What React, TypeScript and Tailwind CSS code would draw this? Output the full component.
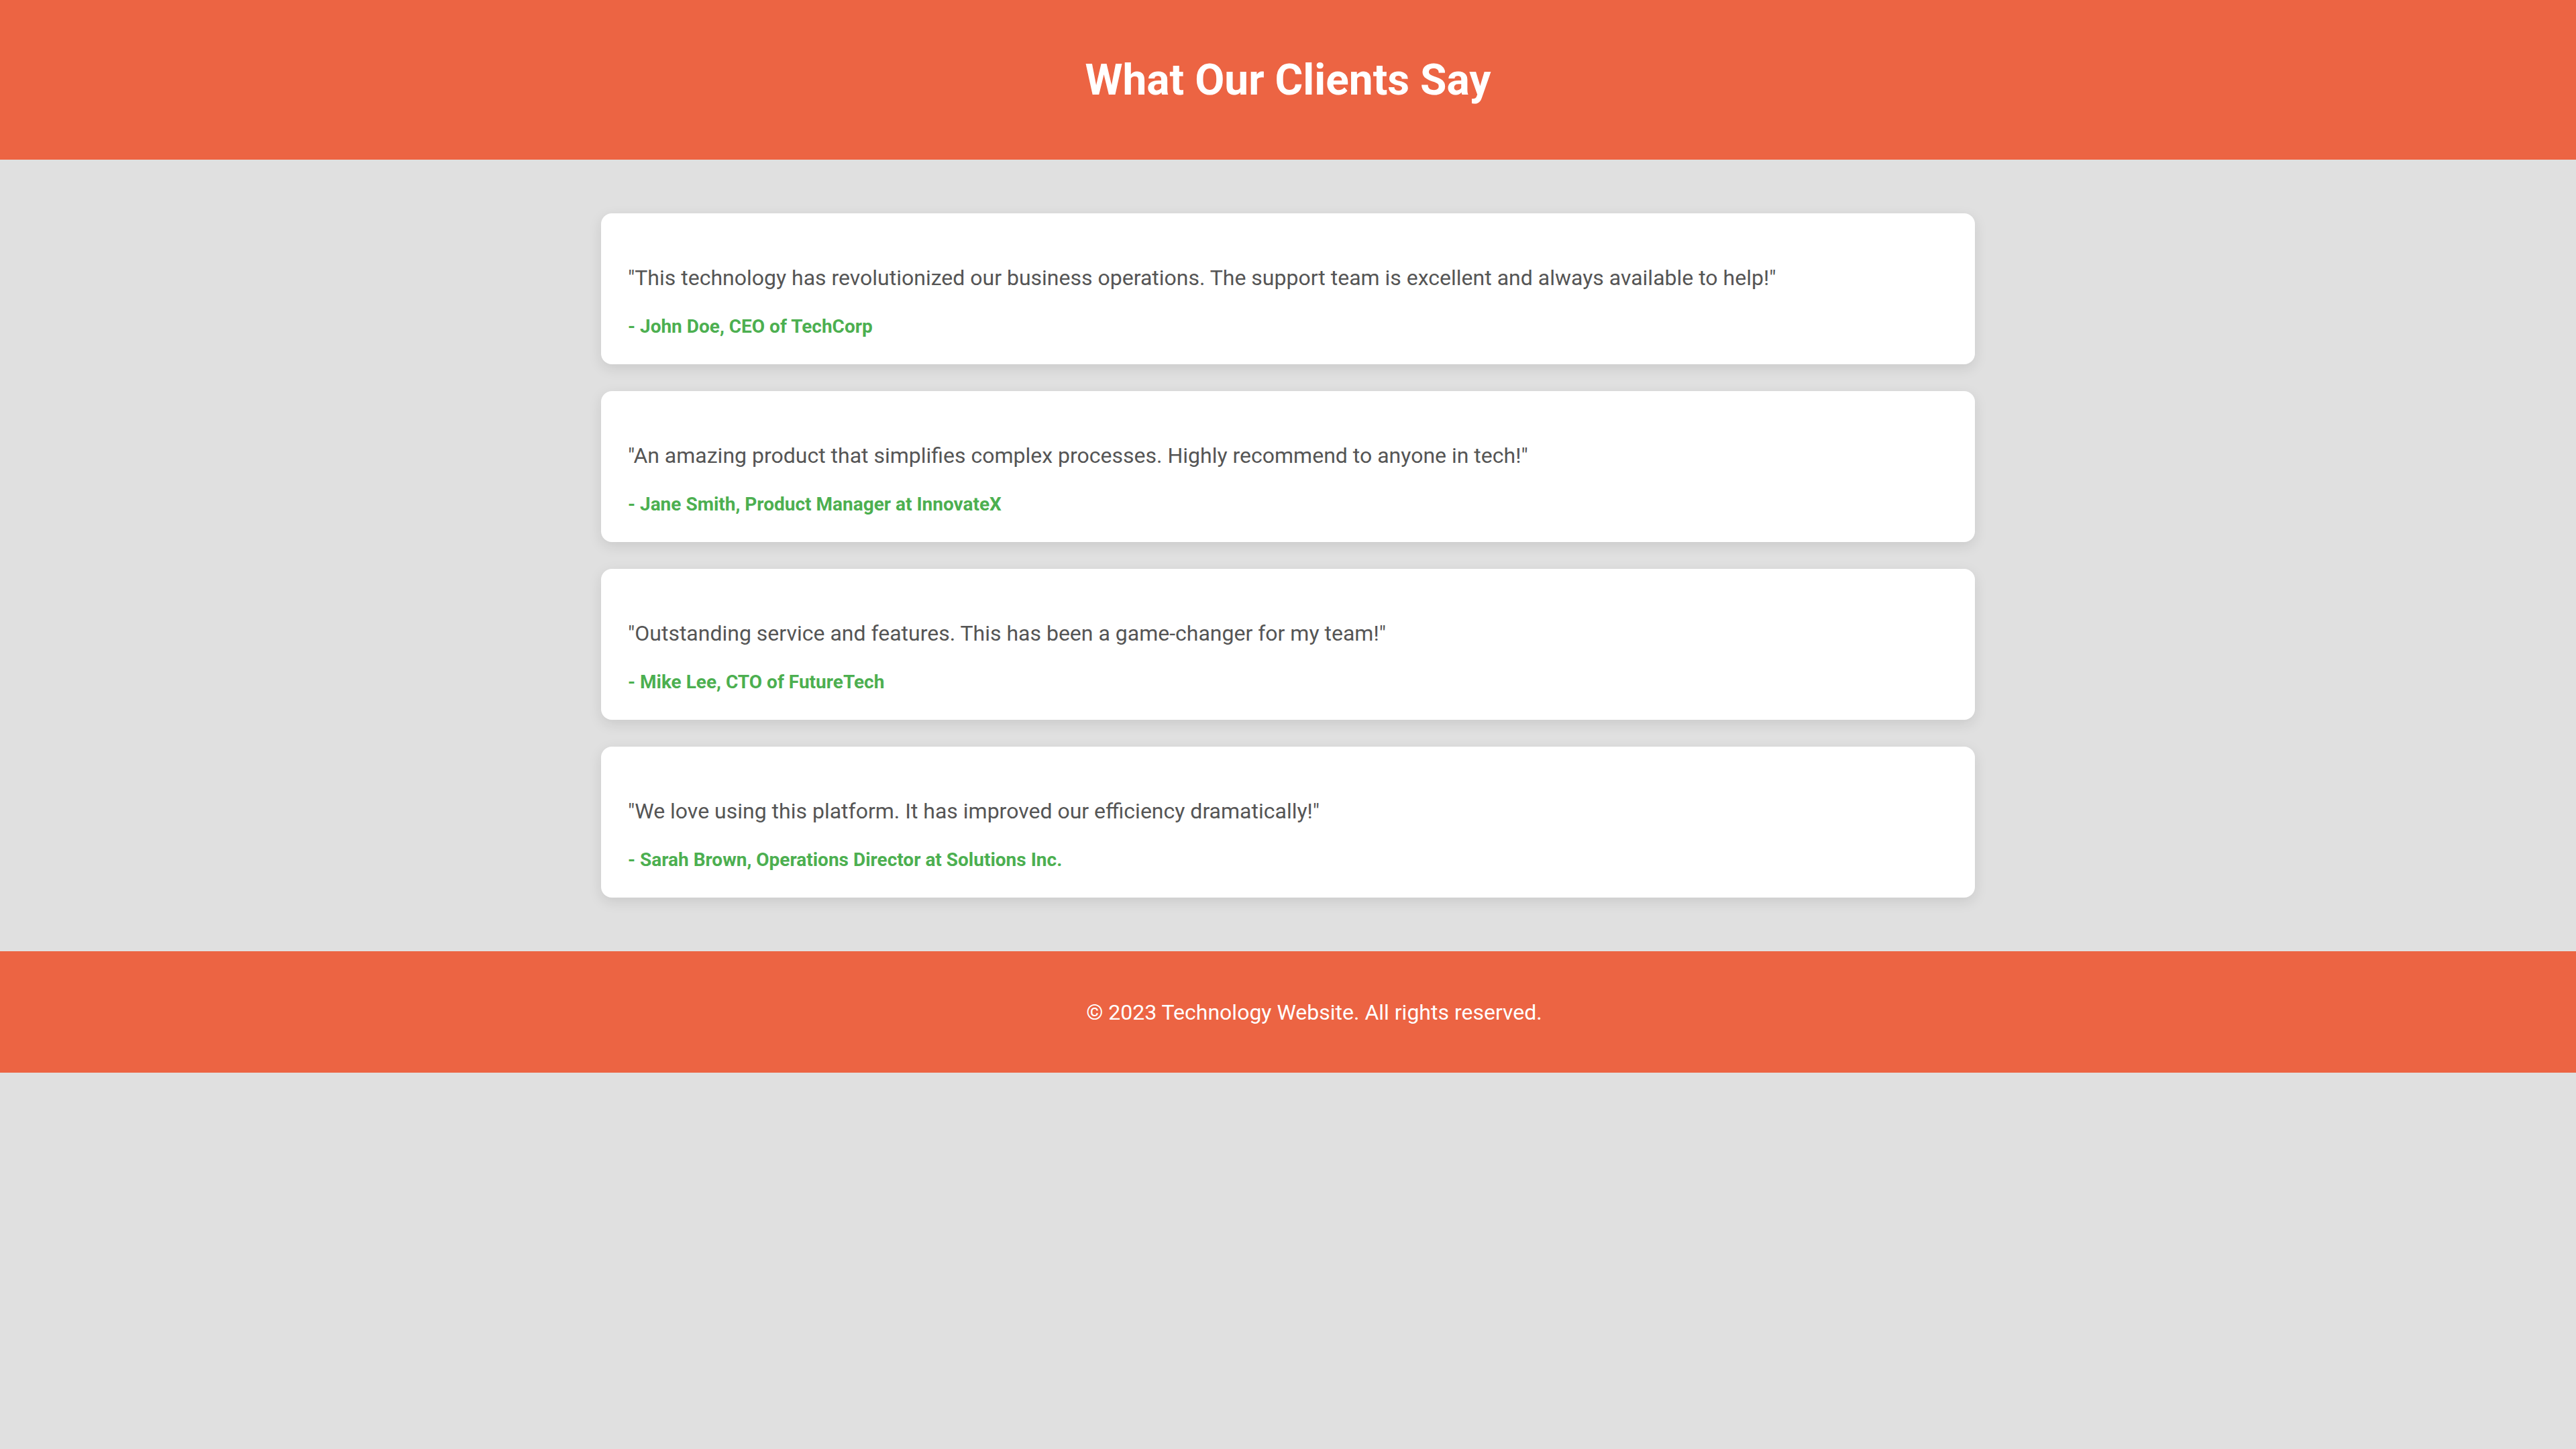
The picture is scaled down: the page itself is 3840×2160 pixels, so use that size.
const testimonials = [
  {
    quote:
      '"This technology has revolutionized our business operations. The support team is excellent and always available to help!"',
    author: "- John Doe, CEO of TechCorp",
  },
  {
    quote:
      '"An amazing product that simplifies complex processes. Highly recommend to anyone in tech!"',
    author: "- Jane Smith, Product Manager at InnovateX",
  },
  {
    quote:
      '"Outstanding service and features. This has been a game-changer for my team!"',
    author: "- Mike Lee, CTO of FutureTech",
  },
  {
    quote:
      '"We love using this platform. It has improved our efficiency dramatically!"',
    author: "- Sarah Brown, Operations Director at Solutions Inc.",
  },
];

function TestimonialCard({ quote, author }: { quote: string; author: string }) {
  return (
    <div className="rounded-2xl bg-white px-[40px] pt-[77px] pb-[40px] shadow-[0_6px_20px_rgba(0,0,0,0.1)]">
      <p className="text-[32px] leading-[38px] text-[#555555]">{quote}</p>
      <p className="mt-[37px] text-[28px] font-bold leading-[33px] text-[#4caf50]">
        {author}
      </p>
    </div>
  );
}

export default function App() {
  return (
    <div className="min-h-screen bg-[#e0e0e0] font-['Roboto',sans-serif]">
      <header className="flex h-[238px] items-center justify-center bg-[#ec6443]">
        <h1 className="text-[64px] font-bold leading-[75px] text-white">
          What Our Clients Say
        </h1>
      </header>

      <main className="px-8 py-[80px]">
        <div className="mx-auto flex w-full max-w-[2048px] flex-col gap-[40px]">
          {testimonials.map((t) => (
            <TestimonialCard key={t.author} quote={t.quote} author={t.author} />
          ))}
        </div>
      </main>

      <footer className="flex h-[181px] items-center justify-center bg-[#ec6443] pl-[78px]">
        <p className="text-[32px] leading-[38px] text-white">
          © 2023 Technology Website. All rights reserved.
        </p>
      </footer>
    </div>
  );
}
